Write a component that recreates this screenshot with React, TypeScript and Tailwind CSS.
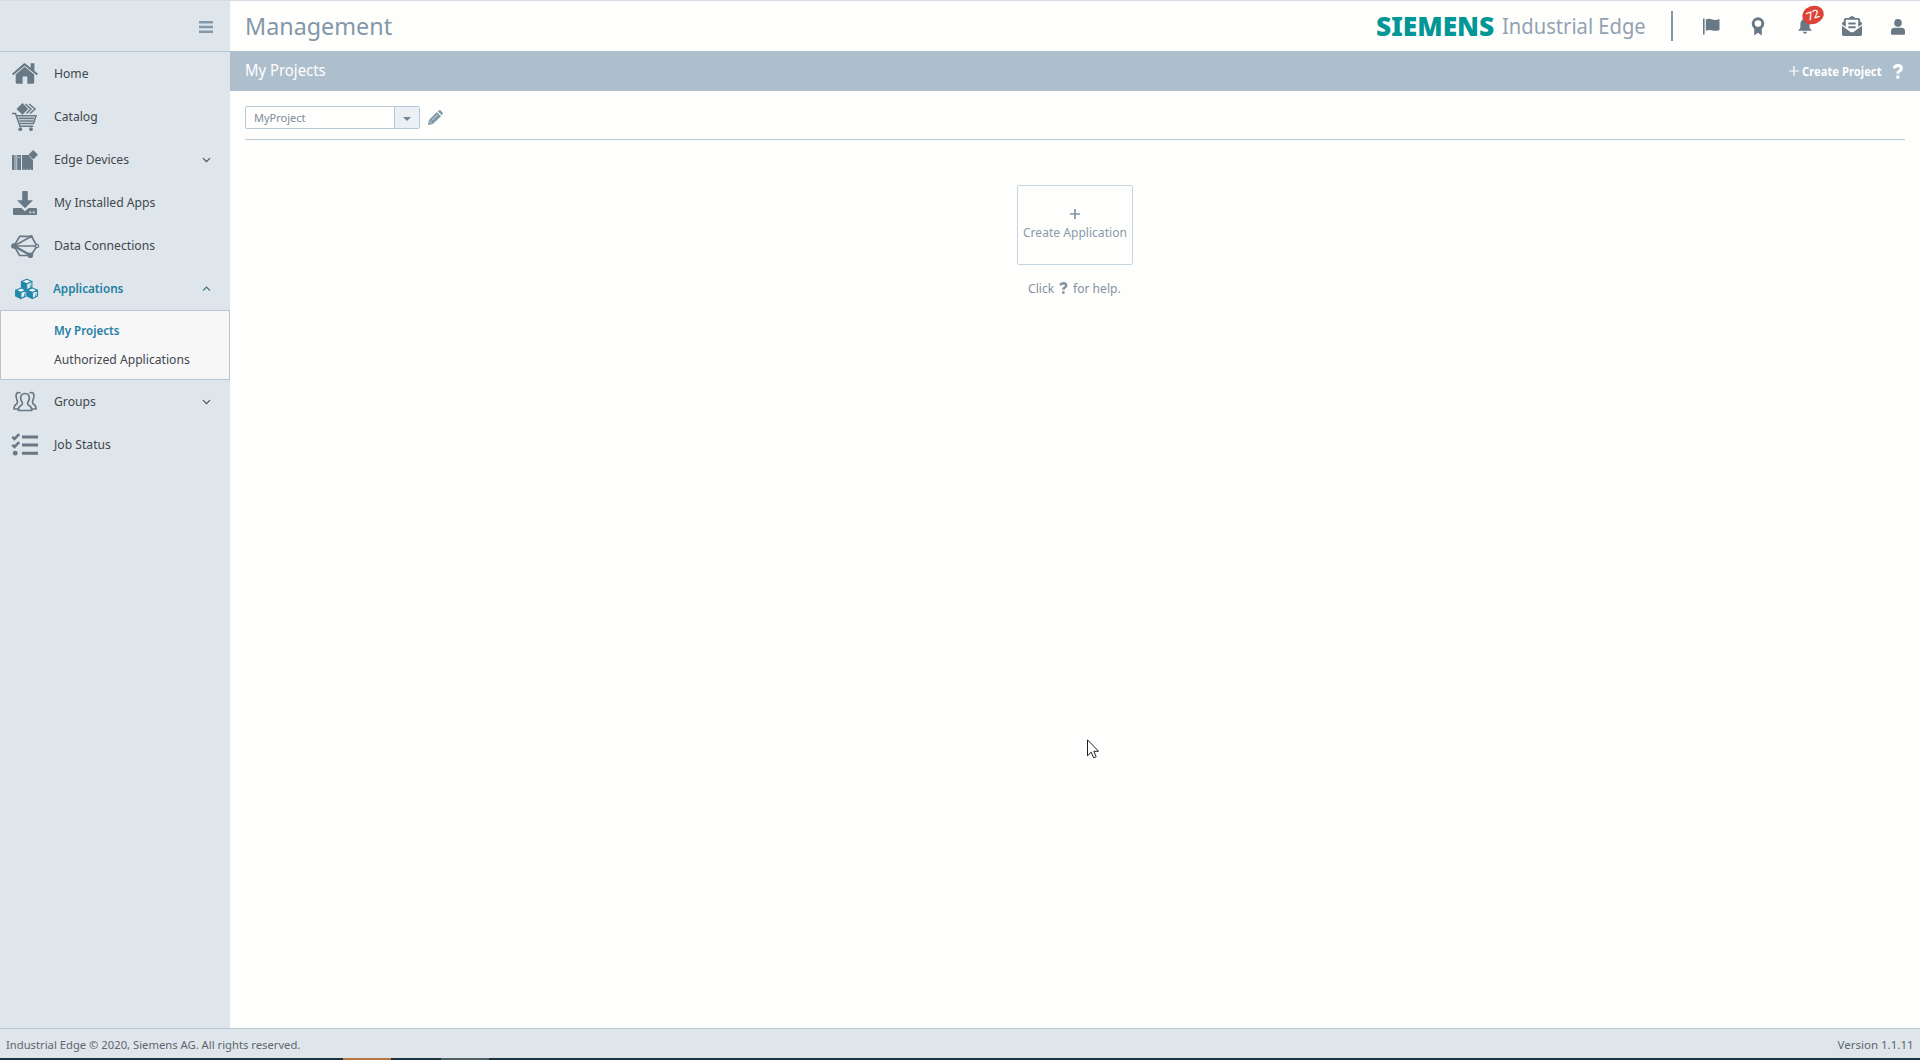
import type { ReactNode } from "react";
import { FaEnvelopeOpenText } from "react-icons/fa";

const HomeIcon = () => (
  <svg viewBox="11 61 28 24" className="h-6 w-7" fill="#697885">
    <path d="M24.7 62 30.6 66.8V62.3H34.4V69.8L38 72.7 36.8 74.3 24.7 64.8 13.2 74.3 12 72.7 22.8 63.2Q24.7 61.2 26 63.2Z" />
    <path d="M24.7 65.8 34.2 73.4V81.3Q34.2 82.8 32.7 82.8H27.3V75.6H22.6V82.8H17.2Q15.7 82.8 15.7 81.3V73.4Z" />
  </svg>
);

const CatalogIcon = () => (
  <svg viewBox="11 101 28 30" className="h-[30px] w-7" fill="none" stroke="#697885">
    <path d="M22.5 102 28.3 108 22.5 113.8 16.5 108Z" fill="#697885" stroke="none" />
    <path d="M25.5 103 31 108 26.5 112.5M29.2 103 35 108 30.2 112.5" strokeWidth="1.5" />
    <path d="M12 112.4H15.5L20 125.2H33.3" strokeWidth="1.5" />
    <path d="M17 114.7H36L33.5 122.6H19.7" strokeWidth="1.5" />
    <path d="M18.5 117.4H34M19.3 120H33.5" strokeWidth="1.6" />
    <circle cx="20.3" cy="128.2" r="1.9" fill="#697885" stroke="none" />
    <circle cx="31" cy="128.2" r="1.9" fill="#697885" stroke="none" />
  </svg>
);

const DevicesIcon = () => (
  <svg viewBox="11 149 28 22" className="h-[22px] w-7" fill="#697885">
    <path d="M12 155h2.6v15H12zM15.4 155h1v15h-1zM17.2 155h3.8v15h-3.8zM22 155h6.4l4.6 5.4V170H22z" />
    <path d="M33.2 150 38 154.8 33.2 159.6 28.4 154.8Z" />
    <path d="M18 157.5h2M24 168.8v1.2M27 168.8v1.2M30 168.8v1.2" stroke="#dee5eb" strokeWidth=".8" />
  </svg>
);

const DownloadIcon = () => (
  <svg viewBox="11 190 28 26" className="h-[26px] w-7" fill="#697885">
    <path d="M22.2 191.8Q22.2 191 23 191H27Q27.8 191 27.8 191.8V200.3H33L25 208.3 17 200.3H22.2Z" />
    <path d="M14 208H21.3L25 211.2 28.7 208H36Q37 208 37 209V214Q37 215 36 215H14Q13 215 13 214V209Q13 208 14 208Z" />
    <path d="M29.4 212.4h1.8M32.8 212.4h1.8" stroke="#dee5eb" strokeWidth="1.6" />
  </svg>
);

const ConnectionsIcon = () => (
  <svg viewBox="10 232 30 26" className="h-[26px] w-[30px]" fill="none" stroke="#697885" strokeWidth="1.7">
    <path d="M14 245 19.7 235.3H31.5L37 245 31 254.5H19.7Z" />
    <path d="M14 245 31.5 235.3M14 245H37" />
    <path d="M14 245 31 254.5" strokeWidth="2.4" />
    <circle cx="13.9" cy="245" r="2.8" fill="#697885" stroke="none" />
    <circle cx="30.4" cy="254.3" r="2.8" fill="#697885" stroke="none" />
    <circle cx="31.3" cy="235.5" r="1.6" fill="#697885" stroke="none" />
    <circle cx="37" cy="245" r="1.6" fill="#dee5eb" strokeWidth="1.3" />
  </svg>
);

const Cube = ({ x, y }: { x: number; y: number }) => (
  <g transform={`translate(${x} ${y})`} stroke="#2387ab" strokeWidth="1.1" strokeLinejoin="round">
    <path d="M0 2.2 5.5 0 10.5 2.2 5.3 4.6Z" fill="#f2f7f9" />
    <path d="M0 2.2 5.3 4.6V10.6L0 8Z" fill="#2387ab" />
    <path d="M10.5 2.2 5.3 4.6V10.6L10.5 8Z" fill="#e4edf2" />
    <path d="M8.9 5.4V8.8L7 9.7" fill="none" strokeWidth=".8" />
  </g>
);

const ApplicationsIcon = () => (
  <svg viewBox="14 278 25 22" className="h-[22px] w-[25px]">
    <Cube x={21.4} y={279.3} />
    <Cube x={15.6} y={288} />
    <Cube x={27} y={288} />
  </svg>
);

const GroupsIcon = () => (
  <svg viewBox="13 391 24 21" className="h-[21px] w-6" fill="none" stroke="#697885" strokeWidth="1.7" strokeLinejoin="round">
    <path d="M20.5 393Q17 391.5 16.2 394.5C15.5 397.5 16.5 399 17.5 401.5Q17.8 403.5 16 404.5Q14 405.5 14 409H18" />
    <path d="M29.5 393Q33 391.5 33.8 394.5C34.5 397.5 33.5 399 32.5 401.5Q32.2 403.5 34 404.5Q36 405.5 36 409H32" />
    <path d="M25 393.5C21.8 393.5 20.4 395.8 20.7 398.6C20.9 400.6 22 401.5 22.4 403Q22.6 405 20.7 405.8Q18.3 406.8 18.3 410.5H31.7Q31.7 406.8 29.3 405.8Q27.4 405 27.6 403C28 401.5 29.1 400.6 29.3 398.6C29.6 395.8 28.2 393.5 25 393.5Z" />
  </svg>
);

const JobsIcon = () => (
  <svg viewBox="11 433 28 23" className="h-[23px] w-7" fill="none" stroke="#697885" strokeWidth="2.6">
    <path d="M22 437H38M22 445H38M22 453.2H38" strokeWidth="3" />
    <path d="M12.3 436.8 14.5 439 19.2 434.2M12.3 444.8 14.5 447 19.2 442.2" />
    <circle cx="15.2" cy="453.2" r="2.4" fill="#697885" stroke="none" />
  </svg>
);

const Chevron = ({ up = false }: { up?: boolean }) => (
  <svg viewBox="0 0 9 6" className="mr-[19px] h-1.5 w-[9px]" fill="none" stroke={up ? "#3d6f87" : "#46525c"} strokeWidth="1.2">
    <path d={up ? "M1 4.7 4.5 1.2 8 4.7" : "M1 1.2 4.5 4.7 8 1.2"} />
  </svg>
);

const QuestionIcon = ({ className }: { className: string }) => (
  <svg viewBox="0 0 10 15" className={className} fill="none" stroke="currentColor" strokeWidth="3">
    <path d="M1 4.3Q2 1.5 5 1.5Q8.4 1.6 8.4 4.4Q8.3 6 6.5 7Q4.8 7.9 4.8 9.8" />
    <path d="M4.8 11.5V14.7" />
  </svg>
);

const NavItem = ({ icon, label, active = false, arrow }: { icon: ReactNode; label: string; active?: boolean; arrow?: "up" | "down" }) => (
  <div className="flex h-[43px] items-center">
    <div className={active ? "flex w-[53px] shrink-0 justify-center" : "flex w-[54px] shrink-0 justify-center pr-1"}>{icon}</div>
    <span
      className={
        active
          ? "flex-1 origin-left scale-x-[0.9] whitespace-nowrap font-semibold text-[#2580a3]"
          : "flex-1 origin-left scale-x-[0.935] whitespace-nowrap"
      }
    >
      {label}
    </span>
    {arrow && <Chevron up={arrow === "up"} />}
  </div>
);

const Sidebar = () => (
  <aside className="flex w-[230px] shrink-0 flex-col bg-[#dee5eb] text-[13px] text-[#41474d]">
    <div className="flex h-[51px] items-center justify-end border-b border-[#b7c5d2] pr-[17px]">
      <svg viewBox="0 0 14 12" className="mt-px h-3 w-3.5" stroke="#8399a9" strokeWidth="2.4">
        <path d="M0 1.2H14M0 6H14M0 10.8H14" />
      </svg>
    </div>
    <nav className="flex flex-col">
      <NavItem icon={<HomeIcon />} label="Home" />
      <NavItem icon={<CatalogIcon />} label="Catalog" />
      <NavItem icon={<DevicesIcon />} label="Edge Devices" arrow="down" />
      <NavItem icon={<DownloadIcon />} label="My Installed Apps" />
      <NavItem icon={<ConnectionsIcon />} label="Data Connections" />
      <NavItem icon={<ApplicationsIcon />} label="Applications" active arrow="up" />
      <div className="flex h-[70px] flex-col border border-[#b5c7d6] bg-[#f7f7f8] pl-[53px] pt-[5px]">
        <span className="flex h-[29px] origin-left scale-x-[0.89] items-center font-semibold text-[#2580a3]">My Projects</span>
        <span className="flex h-[29px] origin-left scale-x-[0.935] items-center whitespace-nowrap">Authorized Applications</span>
      </div>
      <NavItem icon={<GroupsIcon />} label="Groups" arrow="down" />
      <NavItem icon={<JobsIcon />} label="Job Status" />
    </nav>
  </aside>
);

const Header = () => (
  <header className="flex h-[50px] shrink-0 items-center pl-[15px] text-[#8297a8]">
    <h1 className="origin-left scale-x-[0.972] text-[24px] leading-none">Management</h1>
    <div className="ml-auto flex items-center">
      <span className="w-[126px] origin-left scale-x-[1.012] text-[26px] font-black leading-none text-[#009795]">SIEMENS</span>
      <span className="w-[169px] origin-left scale-x-[0.96] whitespace-nowrap text-[21px] leading-none text-[#91a3b3]">Industrial Edge</span>
      <div className="h-[30px] w-0.5 bg-[#8397a6]" />
    </div>
    <div className="ml-[30px] flex items-center text-[#697885]">
      <svg viewBox="0 0 17 17" className="h-[17px] w-[17px]" fill="currentColor">
        <path d="M0 .5H1.6V16.5H0zM2.8 1.6Q6 .2 9.3 1.5Q12.8 2.6 16.5 1V12Q13 13.5 9.5 12.4Q6.2 11.3 2.8 12.7Z" />
      </svg>
      <svg viewBox="0 0 14 19" className="ml-[31px] mt-px h-[19px] w-3.5" fill="none" stroke="currentColor">
        <circle cx="7" cy="6.6" r="4.8" strokeWidth="3" />
        <path d="M3.2 10.8 10.8 10.8V18.6L7 15.8 3.2 18.6Z" fill="currentColor" stroke="none" />
      </svg>
      <div className="relative ml-8 h-4 w-4">
        <svg viewBox="0 0 16 16" className="h-4 w-4" fill="currentColor">
          <path d="M8 .5Q12.6 1.5 12.6 6V9.5Q13 11 15 12.8H1Q3 11 3.4 9.5V6Q3.4 1.5 8 .5ZM6 13.8H10Q9.7 15.8 8 15.8Q6.3 15.8 6 13.8Z" />
        </svg>
        <span className="absolute -top-[12px] left-[5px] flex h-[18px] w-[22px] -rotate-[20deg] items-center justify-center rounded-[50%] bg-[#dc4437] text-[11.5px] font-medium leading-none text-white">
          72
        </span>
      </div>
      <FaEnvelopeOpenText className="ml-[29px] h-5 w-5" />
      <svg viewBox="0 0 14 16" className="ml-[29px] mr-[15px] mt-px h-4 w-3.5" fill="currentColor">
        <circle cx="7" cy="3.9" r="3.8" />
        <path d="M3.5 8.7H10.5Q14 9 14 12.2V14.5Q14 15.8 12.7 15.8H1.3Q0 15.8 0 14.5V12.2Q0 9 3.5 8.7Z" />
      </svg>
    </div>
  </header>
);

const TitleBar = () => (
  <div className="flex h-10 shrink-0 items-center bg-[#adbecc] pl-[15px] text-white">
    <h2 className="-mt-0.5 origin-left scale-x-[0.93] text-[16px]">My Projects</h2>
    <button className="ml-auto flex h-10 items-center">
      <svg viewBox="0 0 10 10" className="mr-[3px] h-2.5 w-2.5" stroke="#fff" strokeWidth="1.2">
        <path d="M5 0V10M0 5H10" />
      </svg>
      <span className="mt-0.5 w-[91px] origin-left scale-x-[0.865] whitespace-nowrap text-left text-[13px] font-bold">Create Project</span>
    </button>
    <QuestionIcon className="mr-[17px] h-[15px] w-2.5" />
  </div>
);

const Workspace = () => (
  <main className="flex flex-1 flex-col px-[15px]">
    <div className="flex h-[49px] items-center border-b border-[#b9cad9] pt-[5px]">
      <div className="flex h-[23px] w-[175px] rounded-xs border border-[#b5c9d9]">
        <span className="flex flex-1 items-center pl-2 pt-px text-[11px] text-[#7d8b98]">MyProject</span>
        <span className="flex w-[25px] items-center justify-center border-l border-[#b5c9d9] bg-[#ebf0f4]">
          <svg viewBox="0 0 8 4" className="mt-0.5 h-1 w-2" fill="#718696">
            <path d="M0 0H8L4 4Z" />
          </svg>
        </span>
      </div>
      <svg viewBox="0 0 15 15" className="ml-2 h-[15px] w-[15px]" fill="#8299a8">
        <path d="M8.8 2 13 6.2 4.9 14 0 15 1 10ZM9.7 1.2 10.7.5Q11.8-.2 12.8.6L14.4 2.2Q15.2 3.2 14.4 4.3L13.7 5.2Z" />
        <path d="M1.7 11.3 3.7 13.3M3.8 10.4 9.6 4.6" stroke="#fff" strokeWidth=".6" />
      </svg>
    </div>
    <div className="flex flex-col items-center pt-[45px] text-[13px] text-[#8a9aa9]">
      <button className="-ml-px flex h-20 w-[116px] flex-col items-center rounded-xs border border-[#c3d6e1] pt-[23px]">
        <svg viewBox="0 0 10 10" className="h-2.5 w-2.5 shrink-0" stroke="#8497a5" strokeWidth="1.7">
          <path d="M5 0V10M0 5H10" />
        </svg>
        <span className="mt-[3px] scale-x-[0.93] whitespace-nowrap leading-5">Create Application</span>
      </button>
      <p className="-ml-0.5 mt-3.5 flex h-5 items-center text-[#84919d]">
        <span className="w-[31px] origin-left scale-x-[0.93]">Click</span>
        <QuestionIcon className="mb-[3px] h-3 w-[9px]" />
        <span className="ml-[5px] w-[47px] origin-left scale-x-[0.93] whitespace-nowrap">for help.</span>
      </p>
    </div>
  </main>
);

export default function App() {
  return (
    <div className="relative flex h-[1060px] w-[1920px] flex-col overflow-hidden border-t border-[#d9dae3] bg-[#fefefd] font-['Noto_Sans',sans-serif]">
      <div className="flex min-h-0 flex-1">
        <Sidebar />
        <div className="flex min-w-0 flex-1 flex-col">
          <Header />
          <TitleBar />
          <Workspace />
        </div>
      </div>
      <footer className="flex h-[30px] shrink-0 items-center justify-between border-t border-[#b7c7d7] bg-[#dee5eb] px-1.5 pt-1 text-[11.3px] text-[#5e666d]">
        <span className="origin-left scale-x-[0.995]">Industrial Edge © 2020, Siemens AG. All rights reserved.</span>
        <span className="origin-right scale-x-[1.02]">Version 1.1.11</span>
      </footer>
      <div className="flex h-0.5 shrink-0 bg-[#1c3240]">
        <div className="ml-[343px] w-12 bg-[#b67838]" />
        <div className="ml-[50px] w-12 bg-[#4e5f66]" />
      </div>
      <svg viewBox="0 0 12 20" className="absolute left-[1087px] top-[738px] h-5 w-3" fill="#fff" stroke="#20212b" strokeWidth="1">
        <path d="M.5.8V16.8L4.2 13.2 6.6 18.8 9.2 17.7 6.8 12.3H11.6Z" />
      </svg>
    </div>
  );
}
